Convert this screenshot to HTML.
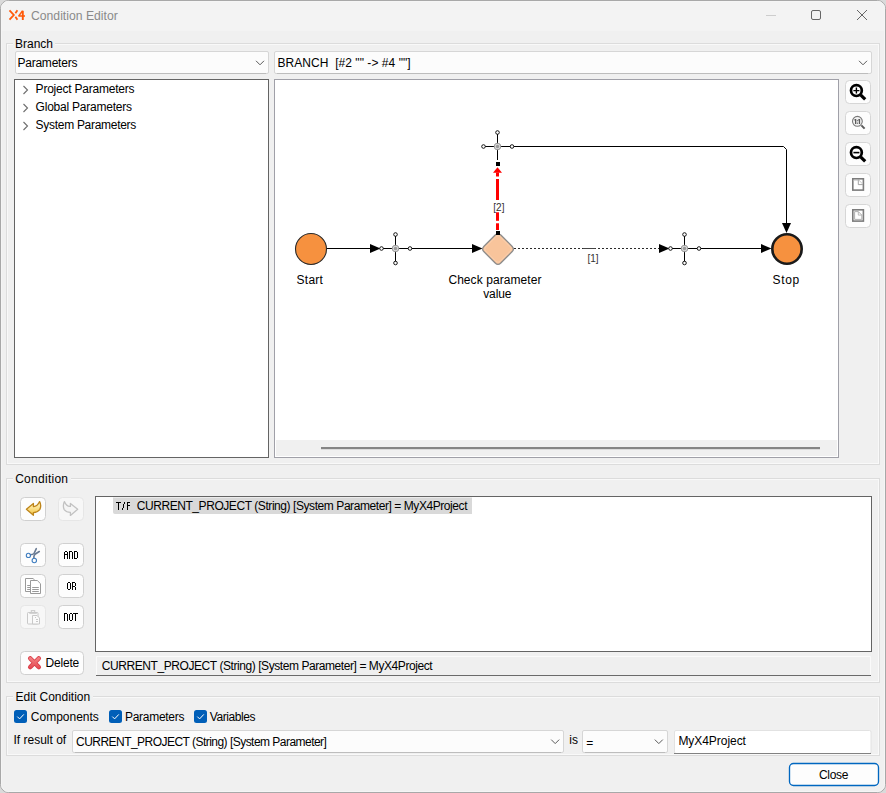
<!DOCTYPE html>
<html><head><meta charset="utf-8">
<style>
html,body{margin:0;padding:0;width:886px;height:793px;overflow:hidden;background:#dadada;}
svg{position:absolute;left:0;top:0;display:block;}
text{white-space:pre;font-family:"Liberation Sans",sans-serif;font-size:12px;fill:#000;}
</style></head><body>
<svg width="886" height="793" viewBox="0 0 886 793">
<!-- window -->
<rect x="0.5" y="0.5" width="885" height="792" rx="8" ry="8" fill="#f0f0f0" stroke="#a8a8a8"/>
<path d="M1 31 V9 A8 8 0 0 1 9 1 H877 A8 8 0 0 1 885 9 V31 Z" fill="#f3f3f3"/>
<rect x="1.5" y="1.5" width="883" height="790" rx="7" ry="7" fill="none" stroke="#f5f5f5" stroke-width="1"/>
<!-- title -->
<g id="logo" fill="none" stroke="#ff5a0a" stroke-width="1.8" stroke-linejoin="miter" stroke-miterlimit="2">
  <path d="M9.5 10.3 L13.8 15 L9.5 19.7"/>
  <path d="M17.4 10.3 L15.4 13.2"/>
  <path d="M15.4 16.8 L17.4 19.7"/>
  <path d="M22.8 20 V10.8" stroke-width="1.9"/>
  <path d="M22.6 10.8 L18.6 16.1 H25" stroke-width="1.5"/>
</g>
<text x="31" y="19.8" style="fill:#8a8a8a;font-size:12.2px">Condition Editor</text>
<line x1="766" y1="15.5" x2="776" y2="15.5" stroke="#cdcdcd" stroke-width="1"/>
<rect x="811.5" y="10.5" width="9" height="9" rx="1.5" fill="none" stroke="#666666" stroke-width="1"/>
<path d="M857 10 L867 20 M867 10 L857 20" stroke="#666666" stroke-width="1" fill="none"/>

<!-- ===== Branch group ===== -->
<g id="groups" fill="none">
  <rect x="6.5" y="43.5" width="873" height="421" stroke="#dcdcdc"/>
  <rect x="7.5" y="44.5" width="871" height="419" stroke="#ffffff" stroke-opacity="0.6"/>
  <rect x="6.5" y="478.5" width="873" height="204" stroke="#dcdcdc"/>
  <rect x="7.5" y="479.5" width="871" height="202" stroke="#ffffff" stroke-opacity="0.6"/>
  <rect x="6.5" y="696.5" width="873" height="59" stroke="#dcdcdc"/>
  <rect x="7.5" y="697.5" width="871" height="57" stroke="#ffffff" stroke-opacity="0.6"/>
</g>
<rect x="13" y="36" width="42" height="12" fill="#f0f0f0"/>
<text x="15" y="47.8">Branch</text>
<rect x="13" y="471" width="58" height="12" fill="#f0f0f0"/>
<text x="15.2" y="483" style="letter-spacing:0.27px">Condition</text>
<rect x="13" y="689" width="80" height="12" fill="#f0f0f0"/>
<text x="15.5" y="700.5">Edit Condition</text>

<!-- combos -->
<rect x="15.5" y="51.5" width="253" height="22" rx="1.5" fill="#fcfcfc" stroke="#d6d6d6"/>
<line x1="18" y1="73.5" x2="266" y2="73.5" stroke="#bdbdbd"/>
<text x="17.4" y="66.7" style="letter-spacing:-0.22px">Parameters</text>
<path d="M256 60.8 L260 64.8 L264 60.8" fill="none" stroke="#5a5a5a" stroke-width="1"/>

<rect x="274.5" y="51.5" width="597" height="22" rx="1.5" fill="#fcfcfc" stroke="#d6d6d6"/>
<line x1="277" y1="73.5" x2="868" y2="73.5" stroke="#bdbdbd"/>
<text x="277.4" y="66.7" style="letter-spacing:0.05px">BRANCH  [#2 "" -&gt; #4 ""]</text>
<path d="M859 60.8 L863 64.8 L867 60.8" fill="none" stroke="#5a5a5a" stroke-width="1"/>

<!-- tree -->
<rect x="14.5" y="79.5" width="254" height="378" fill="#fff" stroke="#646464"/>
<g fill="none" stroke="#6e6e6e" stroke-width="1.1">
  <path d="M23.5 86 L27.5 90 L23.5 94"/>
  <path d="M23.5 104 L27.5 108 L23.5 112"/>
  <path d="M23.5 122 L27.5 126 L23.5 130"/>
</g>
<text x="35.6" y="92.7" style="letter-spacing:-0.22px">Project Parameters</text>
<text x="35.6" y="110.7" style="letter-spacing:-0.23px">Global Parameters</text>
<text x="35.6" y="128.7" style="letter-spacing:-0.29px">System Parameters</text>

<!-- diagram frame -->
<rect x="274.5" y="79.5" width="564" height="378" fill="#fff" stroke="#a0a0a8"/>
<rect x="276" y="440" width="561" height="16" fill="#f0f0f0"/>
<rect x="321" y="447" width="499" height="2.2" fill="#858585"/>

<!-- ===== zoom toolbar ===== -->
<g fill="#fdfdfd" stroke="#d6d6d6">
  <rect x="845.5" y="80.5" width="25" height="23" rx="4"/>
  <rect x="845.5" y="111.5" width="25" height="23" rx="4"/>
  <rect x="845.5" y="142.5" width="25" height="23" rx="4"/>
  <rect x="845.5" y="173.5" width="25" height="23" rx="4"/>
  <rect x="845.5" y="204.5" width="25" height="23" rx="4"/>
</g>
<!-- zoom in -->
<g>
  <circle cx="856.4" cy="90.6" r="5.4" fill="#fff" stroke="#000" stroke-width="2.7"/>
  <path d="M853.4 90.6 H859.4 M856.4 87.6 V93.6" stroke="#000" stroke-width="1.4"/>
  <path d="M860.6 94.8 L865.2 99.4" stroke="#000" stroke-width="3.2" stroke-linecap="butt"/>
</g>
<!-- zoom 1:1 -->
<g>
  <circle cx="857.4" cy="121.3" r="4.9" fill="#f2f2f2" stroke="#7a7a7a" stroke-width="1.1"/>
  <g fill="#5a5a5a">
    <rect x="855" y="119" width="1.3" height="5"/>
    <rect x="854.2" y="119.4" width="1" height="1"/>
    <rect x="858.8" y="119" width="1.3" height="5"/>
    <rect x="857.9" y="119.4" width="1" height="1"/>
    <rect x="856.9" y="120.2" width="1" height="1"/>
    <rect x="856.9" y="122.6" width="1" height="1.2"/>
  </g>
  <path d="M861.4 125.4 L864.6 128.6" stroke="#5a5a5a" stroke-width="2"/>
</g>
<!-- zoom out -->
<g>
  <circle cx="856.4" cy="152.6" r="5.4" fill="#fff" stroke="#000" stroke-width="2.7"/>
  <path d="M853.4 152.6 H859.4" stroke="#000" stroke-width="1.6"/>
  <path d="M860.6 156.8 L865.2 161.4" stroke="#000" stroke-width="3.2"/>
</g>
<!-- fit page -->
<g fill="none">
  <rect x="852.8" y="178.8" width="10.6" height="11.3" fill="#fff" stroke="#7c7c7c" stroke-width="1.6"/>
  <path d="M853.5 180.3 H858.3" stroke="#c8c8c8" stroke-width="0.8"/>
  <path d="M858.3 179.6 V184.6 H862.8" stroke="#9a9a9a" stroke-width="0.9"/>
  <path d="M858.8 180 L862.6 184" stroke="#c8c8c8" stroke-width="1"/>
  <rect x="852.8" y="209.8" width="10.6" height="11.3" fill="#fff" stroke="#7c7c7c" stroke-width="1.6"/>
  <path d="M854.6 211.6 H858.3 L861.8 215.1 V219.4 H854.6 Z" stroke="#a8a8a8" stroke-width="0.9"/>
  <path d="M858.3 211.6 V215.1 H861.8" stroke="#a8a8a8" stroke-width="0.8"/>
</g>

<!-- ===== diagram ===== -->
<g id="diagram">
  <!-- edges -->
  <g stroke="#000" stroke-width="1" fill="none">
    <path d="M327 248.5 H371"/>
    <path d="M381.5 248.5 H472"/>
    <path d="M410.5 248.5 H472"/>
    <path d="M699 248.5 H762"/>
    <path d="M512.5 146.5 H783.5 L786.5 149.5 V224"/>
    <path d="M514 248.5 H660" stroke-dasharray="2 2" stroke="#2a2a2a"/>
    <path d="M583 248.5 H595.5" stroke="#444"/>
  </g>
  <g fill="#000">
    <path d="M370 244 L380.5 248.5 L370 253 Z"/>
    <path d="M472 244 L482.5 248.5 L472 253 Z"/>
    <path d="M659 244 L669.5 248.5 L659 253 Z"/>
    <path d="M761 244 L771.5 248.5 L761 253 Z"/>
    <path d="M782 223 L786.5 233 L791 223 Z"/>
  </g>
  <!-- start -->
  <circle cx="311" cy="249" r="15.5" fill="#f6913f" stroke="#2a2a2a" stroke-width="1.1"/>
  <!-- stop -->
  <circle cx="787" cy="249" r="14.7" fill="#f6913f" stroke="#1a1a1a" stroke-width="2.6"/>
  <!-- decision -->
  <path d="M495.2 235 Q498 232.2 500.8 235 L512 246.2 Q514.8 249 512 251.8 L500.8 263 Q498 265.8 495.2 263 L484 251.8 Q481.2 249 484 246.2 Z" fill="#f8c49b" stroke="#8c8c8c" stroke-width="1.3"/>
  <path d="M496 236.6 Q498 234.6 500 236.6 L510.4 247 Q512.4 249 510.4 251 L500 261.4 Q498 263.4 496 261.4 L485.6 251 Q483.6 249 485.6 247 Z" fill="none" stroke="#fad2b2" stroke-width="0.8"/>
  <!-- transition nodes -->
  <g id="tn1">
    <path d="M395.5 234.5 V263.0 M381.5 248.5 H410.0" stroke="#000" stroke-width="1"/>
    <circle cx="395.5" cy="248.5" r="3.3" fill="#d8d8d8" stroke="#8a8a8a" stroke-width="0.8"/>
    <circle cx="395.5" cy="248.5" r="1.7" fill="#9a9a9a"/>
    <g fill="#fff" stroke="#000" stroke-width="0.9"><circle cx="395.5" cy="234.5" r="1.8"/><circle cx="381.5" cy="248.5" r="1.8"/><circle cx="410.0" cy="248.5" r="1.8"/><circle cx="395.5" cy="263.0" r="1.8"/></g>
  </g>
  <g id="tn2">
    <path d="M684.5 234.5 V263.0 M670.5 248.5 H699.0" stroke="#000" stroke-width="1"/>
    <circle cx="684.5" cy="248.5" r="3.3" fill="#d8d8d8" stroke="#8a8a8a" stroke-width="0.8"/>
    <circle cx="684.5" cy="248.5" r="1.7" fill="#9a9a9a"/>
    <g fill="#fff" stroke="#000" stroke-width="0.9"><circle cx="684.5" cy="234.5" r="1.8"/><circle cx="670.5" cy="248.5" r="1.8"/><circle cx="699.0" cy="248.5" r="1.8"/><circle cx="684.5" cy="263.0" r="1.8"/></g>
  </g>
  <g id="tn3">
    <path d="M497.5 132.5 V160 M483.5 146.5 H512.0" stroke="#000" stroke-width="1"/>
    <circle cx="497.5" cy="146.5" r="3.3" fill="#d8d8d8" stroke="#8a8a8a" stroke-width="0.8"/>
    <circle cx="497.5" cy="146.5" r="1.7" fill="#9a9a9a"/>
    <g fill="#fff" stroke="#000" stroke-width="0.9"><circle cx="497.5" cy="132.5" r="1.8"/><circle cx="483.5" cy="146.5" r="1.8"/><circle cx="512.0" cy="146.5" r="1.8"/></g>
  </g>
  <!-- red connection -->
  <g fill="#ff0000">
    <path d="M493 172.8 L497.5 167.2 L502 172.8 Z"/>
    <rect x="496" y="172.5" width="3" height="4"/>
    <rect x="496" y="179" width="3" height="21"/>
    <rect x="496" y="212.3" width="3" height="8.5"/>
    <rect x="496" y="223.3" width="3" height="6.7"/>
  </g>
  <rect x="496" y="162" width="4" height="4" fill="#000"/>
  <rect x="496" y="231" width="4" height="4" fill="#000"/>
  <text x="493.3" y="211" style="font-size:10px;fill:#333">[2]</text>
  <text x="587.4" y="262" style="font-size:10px;fill:#333">[1]</text>
  <!-- labels -->
  <text x="296.6" y="284" style="letter-spacing:0.25px">Start</text>
  <text x="448.4" y="284.3" style="letter-spacing:0.07px">Check parameter</text>
  <text x="483.2" y="297.5" style="letter-spacing:-0.1px">value</text>
  <text x="772.6" y="284" style="letter-spacing:0.6px">Stop</text>
</g>

<!-- ===== Condition group ===== -->
<g fill="#fdfdfd" stroke="#d0d0d0">
  <rect x="20.5" y="497.5" width="25" height="23" rx="4"/>
  <rect x="58.5" y="497.5" width="25" height="23" rx="4" fill="#f7f7f7" stroke="#e6e6e6"/>
  <rect x="20.5" y="543.5" width="25" height="23" rx="4"/>
  <rect x="58.5" y="543.5" width="25" height="23" rx="4"/>
  <rect x="20.5" y="574.5" width="25" height="23" rx="4"/>
  <rect x="58.5" y="574.5" width="25" height="23" rx="4"/>
  <rect x="20.5" y="605.5" width="25" height="23" rx="4" fill="#f7f7f7" stroke="#e6e6e6"/>
  <rect x="58.5" y="605.5" width="25" height="23" rx="4"/>
  <rect x="20.5" y="651.5" width="63" height="23" rx="4"/>
</g>
<!-- undo icon -->
<defs>
  <linearGradient id="gold" x1="0" y1="0" x2="0" y2="1">
    <stop offset="0" stop-color="#fff3c4"/><stop offset="0.5" stop-color="#fbe08a"/><stop offset="1" stop-color="#f3c23a"/>
  </linearGradient>
  <linearGradient id="redx" gradientUnits="userSpaceOnUse" x1="0" y1="656" x2="0" y2="670">
    <stop offset="0" stop-color="#f58a8a"/><stop offset="1" stop-color="#e2404a"/>
  </linearGradient>
</defs>
<path d="M26.4 509.3 L33.4 503.4 L33.4 506.6 Q37.2 506.9 39.6 501.6 Q41.8 505.6 39.7 509.6 Q37.5 512.4 33.4 512.6 L33.4 515.3 Z" fill="url(#gold)" stroke="#bd8419" stroke-width="1.3" stroke-linejoin="round"/>
<!-- redo icon (disabled) -->
<path d="M77.7 509.3 L70.4 503.4 L70.4 506.4 Q66.6 506.9 64.4 501.6 Q62.4 505.6 64.2 509.6 Q66.4 512.3 70.4 512.4 L70.4 515.4 Z" fill="#f5f5f5" stroke="#c2c2c2" stroke-width="1.3" stroke-linejoin="round"/>
<!-- scissors -->
<g stroke="#6a7b93" stroke-width="1.6" fill="none" stroke-linecap="round">
  <path d="M30.4 554.8 Q33 554.6 34 553.5 L36.3 548.6"/>
  <path d="M33.9 558.2 Q33.6 555.6 35 554.2 L39.3 551.5"/>
</g>
<g fill="none" stroke="#3f7ec0" stroke-width="1.1">
  <circle cx="28.4" cy="555.4" r="2.1"/>
  <circle cx="34.3" cy="560.5" r="2.2"/>
</g>
<!-- copy -->
<g fill="#fff" stroke="#9a9a9a" stroke-width="1" stroke-linejoin="miter">
  <path d="M25.5 578.5 H33.2 L34.2 579.8 V591.5 H25.5 Z"/>
  <path d="M30.5 580.5 H37.3 L40.5 583.7 V593.5 H30.5 Z"/>
</g>
<g stroke="#9a9a9a" stroke-width="1">
  <path d="M27.2 585.5 H30.2 M27.2 587.5 H30.2 M27.2 589.5 H30.2"/>
  <path d="M32.2 587.5 H38.8 M32.2 589.5 H38.8 M32.2 591.5 H38.8"/>
</g>
<!-- paste disabled -->
<g fill="#f9f9f9" stroke="#c9c9c9" stroke-width="1">
  <rect x="27.5" y="612.5" width="10.5" height="11.5" rx="0.8"/>
  <rect x="31.3" y="610.6" width="3.4" height="1.8" fill="#fafafa"/>
  <path d="M29.3 613.2 H36.8" stroke-width="1.2"/>
  <path d="M32.5 615.5 H37 L39.5 618 V624 H32.5 Z" fill="#fbfbfb"/>
</g>
<g stroke="#c9c9c9" stroke-width="1"><path d="M36 619.5 H38 M36 621.5 H38 M35 617.5 H36"/></g>

<!-- AND / OR / NOT pixel text -->
<path d="M65 551h1v1h-1zM66 551h1v1h-1zM64 552h1v1h-1zM64 553h1v1h-1zM64 554h1v1h-1zM64 555h1v1h-1zM64 556h1v1h-1zM64 557h1v1h-1zM64 558h1v1h-1zM67 552h1v1h-1zM67 553h1v1h-1zM67 554h1v1h-1zM67 555h1v1h-1zM67 556h1v1h-1zM67 557h1v1h-1zM67 558h1v1h-1zM65 554h1v1h-1zM66 554h1v1h-1zM69 551h1v1h-1zM69 552h1v1h-1zM69 553h1v1h-1zM69 554h1v1h-1zM69 555h1v1h-1zM69 556h1v1h-1zM69 557h1v1h-1zM69 558h1v1h-1zM70 551h1v1h-1zM71 551h1v1h-1zM72 552h1v1h-1zM72 553h1v1h-1zM72 554h1v1h-1zM72 555h1v1h-1zM72 556h1v1h-1zM72 557h1v1h-1zM72 558h1v1h-1zM74 551h1v1h-1zM74 552h1v1h-1zM74 553h1v1h-1zM74 554h1v1h-1zM74 555h1v1h-1zM74 556h1v1h-1zM74 557h1v1h-1zM74 558h1v1h-1zM75 551h1v1h-1zM76 551h1v1h-1zM77 552h1v1h-1zM77 553h1v1h-1zM77 554h1v1h-1zM77 555h1v1h-1zM77 556h1v1h-1zM77 557h1v1h-1zM75 558h1v1h-1zM76 558h1v1h-1zM68 582h1v1h-1zM69 582h1v1h-1zM67 583h1v1h-1zM67 584h1v1h-1zM67 585h1v1h-1zM67 586h1v1h-1zM67 587h1v1h-1zM67 588h1v1h-1zM70 583h1v1h-1zM70 584h1v1h-1zM70 585h1v1h-1zM70 586h1v1h-1zM70 587h1v1h-1zM70 588h1v1h-1zM68 589h1v1h-1zM69 589h1v1h-1zM72 582h1v1h-1zM72 583h1v1h-1zM72 584h1v1h-1zM72 585h1v1h-1zM72 586h1v1h-1zM72 587h1v1h-1zM72 588h1v1h-1zM72 589h1v1h-1zM73 582h1v1h-1zM74 582h1v1h-1zM75 583h1v1h-1zM75 584h1v1h-1zM75 585h1v1h-1zM73 586h1v1h-1zM74 586h1v1h-1zM75 587h1v1h-1zM75 588h1v1h-1zM75 589h1v1h-1zM64 613h1v1h-1zM64 614h1v1h-1zM64 615h1v1h-1zM64 616h1v1h-1zM64 617h1v1h-1zM64 618h1v1h-1zM64 619h1v1h-1zM64 620h1v1h-1zM65 613h1v1h-1zM66 613h1v1h-1zM67 614h1v1h-1zM67 615h1v1h-1zM67 616h1v1h-1zM67 617h1v1h-1zM67 618h1v1h-1zM67 619h1v1h-1zM67 620h1v1h-1zM70 613h1v1h-1zM71 613h1v1h-1zM69 614h1v1h-1zM69 615h1v1h-1zM69 616h1v1h-1zM69 617h1v1h-1zM69 618h1v1h-1zM69 619h1v1h-1zM72 614h1v1h-1zM72 615h1v1h-1zM72 616h1v1h-1zM72 617h1v1h-1zM72 618h1v1h-1zM72 619h1v1h-1zM70 620h1v1h-1zM71 620h1v1h-1zM73 613h1v1h-1zM74 613h1v1h-1zM75 613h1v1h-1zM76 613h1v1h-1zM77 613h1v1h-1zM75 614h1v1h-1zM75 615h1v1h-1zM75 616h1v1h-1zM75 617h1v1h-1zM75 618h1v1h-1zM75 619h1v1h-1zM75 620h1v1h-1z" fill="#000" shape-rendering="crispEdges"/>

<!-- delete -->
<path d="M30.3 658.5 L38.7 667 M38.7 658.5 L30.3 667" stroke="#d83844" stroke-width="4.6" stroke-linecap="round"/>
<path d="M30.3 658.5 L38.7 667 M38.7 658.5 L30.3 667" stroke="url(#redx)" stroke-width="3" stroke-linecap="round"/>
<text x="45.4" y="666.7" style="letter-spacing:-0.16px">Delete</text>

<!-- condition text area -->
<rect x="95.5" y="496.5" width="776" height="155" fill="#fff" stroke="#646464"/>
<path d="M113 497.5 H472 V514 H115 Q113 514 113 512 Z" fill="#d9d9d9"/>
<path d="M116 502h1v1h-1zM117 502h1v1h-1zM118 502h1v1h-1zM119 502h1v1h-1zM120 502h1v1h-1zM118 503h1v1h-1zM118 504h1v1h-1zM118 505h1v1h-1zM118 506h1v1h-1zM118 507h1v1h-1zM118 508h1v1h-1zM118 509h1v1h-1zM124 502h1v1h-1zM124 503h1v1h-1zM123 504h1v1h-1zM123 505h1v1h-1zM123 506h1v1h-1zM123 507h1v1h-1zM122 508h1v1h-1zM122 509h1v1h-1zM127 502h1v1h-1zM127 503h1v1h-1zM127 504h1v1h-1zM127 505h1v1h-1zM127 506h1v1h-1zM127 507h1v1h-1zM127 508h1v1h-1zM127 509h1v1h-1zM128 502h1v1h-1zM129 502h1v1h-1zM128 505h1v1h-1zM129 505h1v1h-1z" fill="#000" shape-rendering="crispEdges"/>

<text x="136.7" y="509.8" style="letter-spacing:-0.43px">CURRENT_PROJECT (String) [System Parameter] = MyX4Project</text>

<!-- status field -->
<rect x="96" y="656" width="775" height="19.5" fill="#efefef"/>
<path d="M96.5 675 V656.5 H870.5 V675" fill="none" stroke="#fafafa"/>
<line x1="96" y1="675.5" x2="871" y2="675.5" stroke="#6a6a6a"/>
<text x="101.8" y="670" style="letter-spacing:-0.43px">CURRENT_PROJECT (String) [System Parameter] = MyX4Project</text>

<!-- ===== Edit condition ===== -->
<g fill="#005fb8">
  <rect x="14" y="710" width="13" height="13" rx="2.5"/>
  <rect x="109" y="710" width="13" height="13" rx="2.5"/>
  <rect x="194" y="710" width="13" height="13" rx="2.5"/>
</g>
<g fill="none" stroke="#fff" stroke-width="1">
  <path d="M17.3 716.6 L19.6 718.9 L23.8 714.4"/>
  <path d="M112.3 716.6 L114.6 718.9 L118.8 714.4"/>
  <path d="M197.3 716.6 L199.6 718.9 L203.8 714.4"/>
</g>
<text x="30.8" y="721">Components</text>
<text x="125" y="721" style="letter-spacing:-0.29px">Parameters</text>
<text x="209.8" y="721" style="letter-spacing:-0.44px">Variables</text>
<text x="13.5" y="743.7">If result of</text>

<rect x="72.5" y="730.5" width="491" height="22" rx="1.5" fill="#fcfcfc" stroke="#d6d6d6"/>
<line x1="75" y1="752.5" x2="561" y2="752.5" stroke="#bdbdbd"/>
<text x="76" y="745.9" style="letter-spacing:-0.53px">CURRENT_PROJECT (String) [System Parameter]</text>
<path d="M551.2 739.6 L555.2 743.6 L559.2 739.6" fill="none" stroke="#5a5a5a"/>
<text x="569.3" y="744.2">is</text>
<rect x="582.5" y="730.5" width="85" height="22" rx="1.5" fill="#fcfcfc" stroke="#d6d6d6"/>
<line x1="585" y1="752.5" x2="665" y2="752.5" stroke="#bdbdbd"/>
<text x="586.3" y="746.5">=</text>
<path d="M654.8 739.6 L658.8 743.6 L662.8 739.6" fill="none" stroke="#5a5a5a"/>
<rect x="674.5" y="730.5" width="196.5" height="23" rx="1.5" fill="#fff" stroke="#e2e2e2"/>
<line x1="674" y1="753.5" x2="871" y2="753.5" stroke="#828282" stroke-width="1"/>
<text x="678.4" y="745" style="letter-spacing:-0.05px">MyX4Project</text>

<!-- close -->
<rect x="789.5" y="763.5" width="89" height="22" rx="4" fill="#fdfdfd" stroke="#0067c0" stroke-width="1.35"/>
<text x="819" y="779" style="letter-spacing:-0.33px">Close</text>
</svg>
</body></html>
